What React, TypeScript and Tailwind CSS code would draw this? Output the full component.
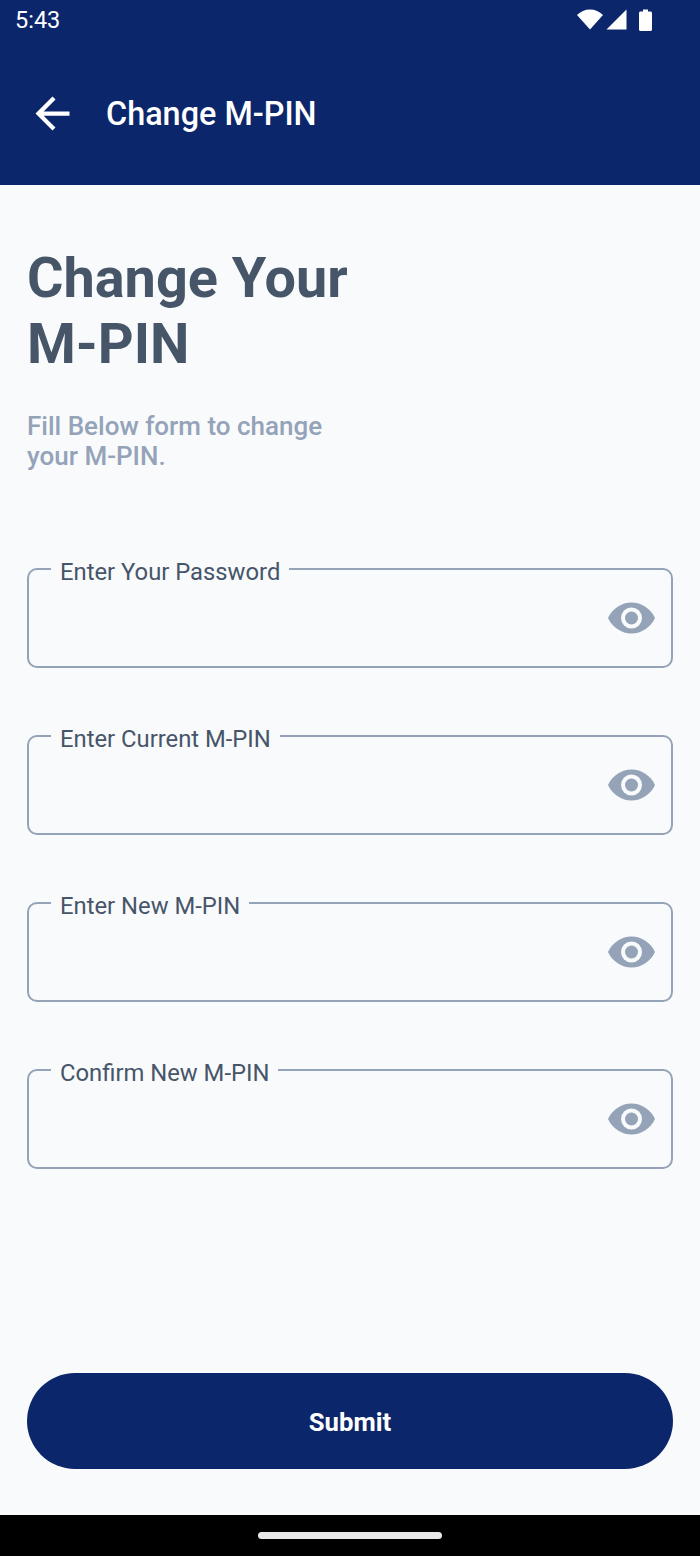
const fields = ["Enter Your Password", "Enter Current M-PIN", "Enter New M-PIN", "Confirm New M-PIN"];

function Eye() {
	return (
		<svg width="47" height="32" viewBox="0 0 47 32" className="shrink-0">
			<path d="M0 16C4.500 6.500 13.500 0.500 23.500 0.500S42.500 6.500 47 16C42.500 25.500 33.500 31.500 23.500 31.500S4.500 25.500 0 16Z" fill="#94a3b8" />
			<circle cx="23.500" cy="16" r="10.500" fill="#f8fafc" />
			<circle cx="23.500" cy="16" r="6.500" fill="#94a3b8" />
		</svg>
	);
}

export default function App() {
	return (
		<main className="flex h-[1556px] w-[700px] flex-col overflow-hidden bg-[#f8fafc] font-['Roboto',sans-serif]">
			<header className="h-[185px] shrink-0 bg-[#0c266b] text-white">
				<div className="flex h-[42px] items-center justify-between pl-[15px] pr-[48px]">
					<span className="text-[23.500px] leading-none">5:43</span>
					<div className="mb-[3px] flex items-center">
						<svg width="26" height="21" viewBox="0 0 26 21"><path d="M0 6C3.500 2.500 8 0.500 13 0.500S22.500 2.500 26 6L13 20.500Z" fill="white" /></svg>
						<svg width="21" height="21" viewBox="0 0 21 21" className="ml-[3px]"><path d="M20.500 0.500V20.500H0.500Z" fill="white" /></svg>
						<svg width="13" height="22" viewBox="0 0 13 22" className="ml-[12px]"><path d="M4 0.500H9V2.500H11.500C12.300 2.500 13 3.200 13 4V20.500C13 21.300 12.300 22 11.500 22H1.500C0.700 22 0 21.300 0 20.500V4C0 3.200 0.700 2.500 1.500 2.500H4Z" fill="white" /></svg>
					</div>
				</div>
				<div className="flex h-[142px] items-center">
					<svg width="51" height="51" viewBox="0 0 24 24" fill="white" className="ml-[27px] shrink-0">
						<path d="M20 11H7.830l5.590-5.590L12 4l-8 8 8 8 1.410-1.410L7.830 13H20v-2z" />
					</svg>
					<h1 className="ml-[28px] pt-[2px] text-[32.400px] font-medium leading-none">Change M-PIN</h1>
				</div>
			</header>

			<section className="flex flex-1 flex-col px-[27px]">
				<h2 className="mt-[60px] text-[55.800px] font-bold leading-[66px] text-[#475569]">Change Your<br />M-PIN</h2>
				<p className="mt-[34px] text-[26px] font-medium leading-[30px] text-[#94a3b8]">Fill Below form to change<br />your M-PIN.</p>

				<div className="mt-[97px] flex flex-col gap-[67px]">
					{fields.map((label) => (
						<div key={label} className="relative flex h-[100px] items-center justify-end rounded-[10px] border-2 border-[#94a3b8] pr-[16px]">
							<span className="absolute left-[22px] top-[-12px] bg-[#f8fafc] px-[9px] text-[23.800px] leading-[28px] text-[#475569]">{label}</span>
							<Eye />
						</div>
					))}
				</div>

				<button className="mt-auto mb-[46px] flex h-[96px] w-full items-center justify-center rounded-[48px] bg-[#0c266b] pt-[2px] text-[25.700px] font-bold text-white">Submit</button>
			</section>

			<footer className="flex h-[41px] shrink-0 items-center justify-center bg-black">
				<div className="h-[7px] w-[184px] rounded-full bg-[#e8e8e8]"></div>
			</footer>
		</main>
	);
}
